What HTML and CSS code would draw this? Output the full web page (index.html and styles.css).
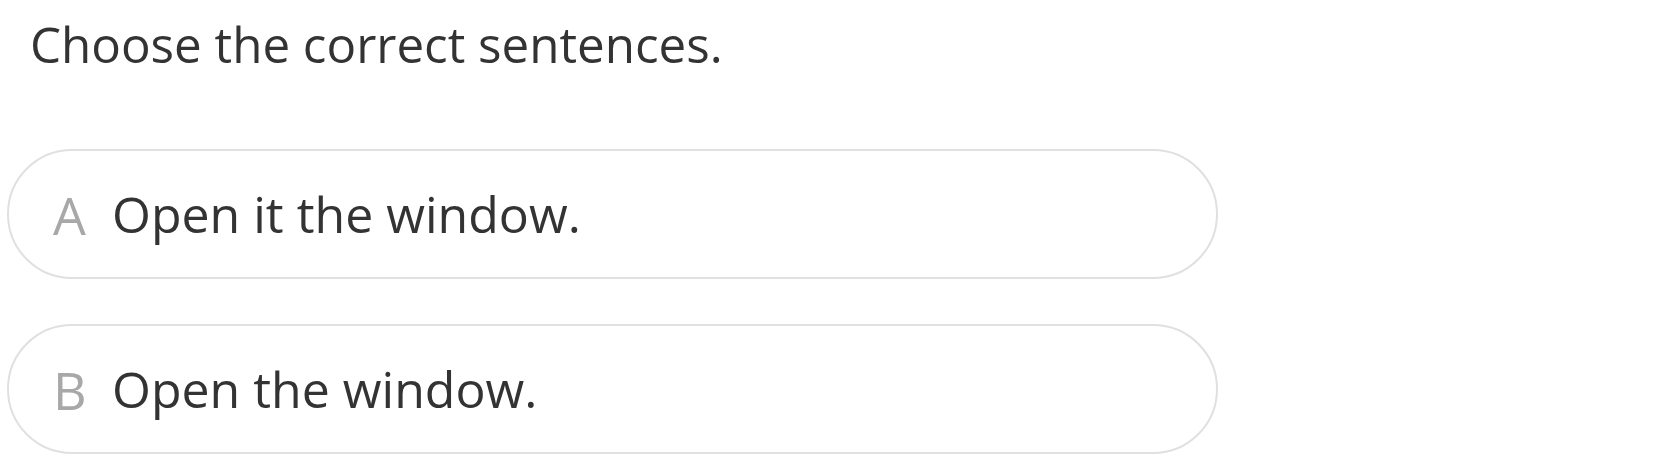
FILE: index.html
```html
<!DOCTYPE html>
<html lang="en">
<head>
<meta charset="utf-8">
<title>Quiz</title>
<link rel="stylesheet" href="styles.css">
</head>
<body>
<div class="quiz">
  <h1 class="question">Choose the correct sentences.</h1>
  <div class="options">
    <div class="option"><span class="letter">A</span><span class="text">Open it the window.</span></div>
    <div class="option"><span class="letter">B</span><span class="text">Open the window.</span></div>
  </div>
</div>
</body>
</html>
```
FILE: styles.css
```css
html, body {
  margin: 0;
  padding: 0;
  background: #ffffff;
}
body {
  font-family: "Open Sans", "Noto Sans", sans-serif;
  color: #333333;
}
.quiz {
  padding: 0 0 0 7px;
}
.question {
  margin: 0;
  padding: 8px 0 0 23px;
  font-size: 49.3px;
  font-weight: 400;
  line-height: 72px;
  color: #333333;
}
.options {
  display: flex;
  flex-direction: column;
  gap: 45px;
  margin-top: 69px;
  width: 1211px;
}
.option {
  box-sizing: border-box;
  height: 130px;
  border: 2px solid #e0e0e0;
  border-radius: 65px;
  display: flex;
  align-items: center;
  padding-left: 44px;
  font-size: 50px;
}
.letter {
  color: #a8a8a8;
  width: 59px;
  font-size: 52px;
}
.text {
  color: #333333;
}
```
